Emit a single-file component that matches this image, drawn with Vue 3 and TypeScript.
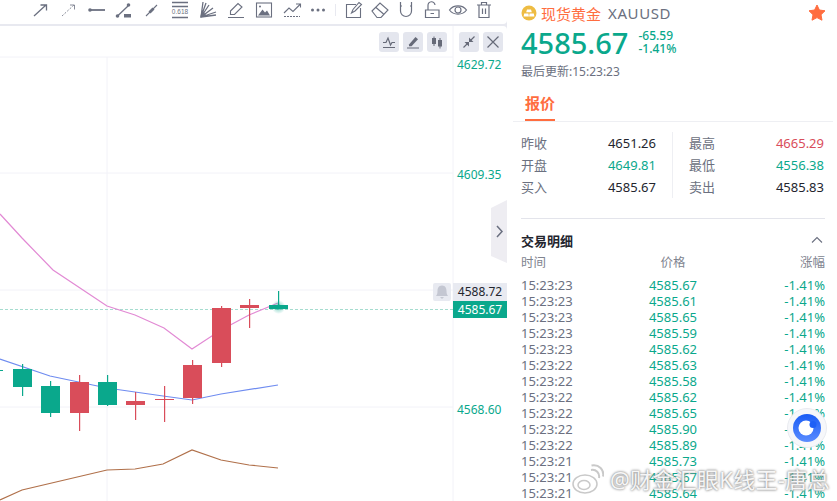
<template>
  <div class="page">
    <div class="left">
      <div class="toolbar">
        <div class="tool-group">
          <svg class="tool" viewBox="0 0 20 20"><path d="M4 16 16 5M10.500 5H16.500V10.500" /></svg>
          <svg class="tool tool--thin" viewBox="0 0 20 20"><path d="M4 16 16 5" stroke-dasharray="2 1.500" /><path d="M12 5h4.500v4.500" /></svg>
          <svg class="tool" viewBox="0 0 20 20"><path d="M3 10H19" stroke-width="1.800" /><circle class="solid" cx="4" cy="10" r="1.800" /></svg>
          <svg class="tool" viewBox="0 0 20 20"><path d="M3.500 16 14 6" stroke-width="1.300" /><circle class="solid" cx="3.500" cy="16" r="1.800" /><circle class="solid" cx="14.500" cy="5" r="1.800" /><rect class="solid" x="10" y="14" width="7" height="3.500" /></svg>
          <svg class="tool" viewBox="0 0 20 20"><path d="M4 16 15 5" stroke-width="1.100" /><path d="M7.500 12.500 11.500 8.500" stroke-width="2.800" /></svg>
          <svg class="tool" viewBox="0 0 20 20"><path d="M2 2.500H18M2 6.500H18M2 17.500H18" stroke-width="1.400" /><text class="fib" x="10" y="13.600" text-anchor="middle">0.618</text></svg>
          <svg class="tool" viewBox="0 0 20 20"><path d="M3 17 5 2M3 17 8 3M3 17 11 5M3 17 15 8M3 17 18 12M3 17 18 15" stroke-width="1.300" /><path class="solid" d="M2 18 4 10 8 15Z" /></svg>
          <svg class="tool" viewBox="0 0 20 20"><path d="M4.500 11 12 3.500l4 3.500-7.500 7.500H4.500ZM2 17.500H18" stroke-width="1.100" /></svg>
          <svg class="tool" viewBox="0 0 20 20"><rect x="2.500" y="3" width="15" height="14" stroke-width="1.100" /><path class="solid" d="M4 15.500 8.500 9.500 11 12.500 13 10.500 16 15.500Z" /><circle class="solid" cx="6" cy="6.500" r="1" /></svg>
          <svg class="tool" viewBox="0 0 20 20"><path d="M2 13 7 8l4 3.500L18 4.500M14 4h4.500v3.500" stroke-width="1.100" /><path d="M2 16.500H18" stroke-dasharray="2 1" stroke-width="1" /></svg>
          <svg class="tool tool--dots" viewBox="0 0 20 20"><circle class="solid" cx="4.500" cy="10" r="1.500" /><circle class="solid" cx="10" cy="10" r="1.500" /><circle class="solid" cx="15.500" cy="10" r="1.500" /></svg>
        </div>
        <span class="tool-sep"></span>
        <div class="tool-group tool-group--tight">
          <svg class="tool" viewBox="0 0 20 20"><path d="M16.500 8V17.500H2.500V4.500H12" stroke-width="1.100" /><path d="M7.500 13 9 9.500 15 2.500l2.500 2L11 11Z" stroke-width="1.100" /></svg>
          <svg class="tool" viewBox="0 0 20 20"><path d="M2 11 10 3l8 7-7 7.500H7ZM6 7.500l7.500 6.500" stroke-width="1.100" /></svg>
          <svg class="tool" viewBox="0 0 20 20"><path d="M4.500 2V11a5.500 5.500 0 0 0 11 0V2M4.500 6H6M14 6H15.500" stroke-width="1.200" /></svg>
          <svg class="tool" viewBox="0 0 20 20"><path d="M3.500 10H17V17.500H3.500ZM6 10V5.500a3.500 3.500 0 0 1 7-.5M8.500 13.500H12" stroke-width="1.200" /></svg>
          <svg class="tool" viewBox="0 0 20 20"><path d="M1.500 10C5.500 4.500 14.500 4.500 18.500 10 14.500 15.500 5.500 15.500 1.500 10Z" stroke-width="1.200" /><circle cx="10" cy="10" r="3" stroke-width="1.200" /></svg>
          <svg class="tool" viewBox="0 0 20 20"><path d="M3 5H17M5 5V17.500H15V5M7.500 5V2.500H12.500V5M8.500 8.500V14M11.500 8.500V14" stroke-width="1.200" /></svg>
        </div>
      </div>

      <div class="chart">
        <svg class="plot" viewBox="0 26 507 475">
          <!-- grid -->
          <path class="grid" d="M0 57H453M0 173H453M0 290H453M0 407H453M107 57V501M453 26V501" />
          <path class="last-line" d="M0 309.500H453" />
          <!-- averages -->
          <polyline class="ma ma--pink" points="0,214 22,238 53,270 107,306 135,315 164,328 192,349 221,330 249,315 278,303" />
          <polyline class="ma ma--blue" points="0,359 50,376 107,388 163,396 192,400 221,394 278,385" />
          <polyline class="ma ma--brown" points="0,500 22,490 107,470 135,469 163,464 192,450 221,460 249,465 278,468" />
          <!-- candles -->
          <g v-for="c in candles" :key="c.x" :class="c.up ? 'up' : 'down'">
            <rect :x="c.x + 9" :y="c.hi" width="1.200" :height="c.lo - c.hi" />
            <rect :x="c.x" :y="c.top" width="19" :height="c.bottom - c.top" />
          </g>
          <rect class="up-fill" x="0" y="370" width="3" height="1" />
          <circle cx="278.500" cy="307" r="7" fill="url(#glow)" />
          <circle class="up-fill" cx="278.500" cy="307" r="2.500" />
          <defs>
            <radialGradient id="glow">
              <stop offset="0%" stop-color="#0aa88c" stop-opacity="0.55" />
              <stop offset="100%" stop-color="#0aa88c" stop-opacity="0" />
            </radialGradient>
          </defs>
          <text class="axis" x="457" y="69">4629.72</text>
          <text class="axis" x="457" y="179">4609.35</text>
          <text class="axis" x="457" y="414">4568.60</text>
        </svg>

        <div class="chart-btns">
          <button class="cbtn"><svg viewBox="0 0 20 20"><path d="M4 10.500H7L9 6l2.500 7 1.500-2.500h3M4 15.500H16" /></svg></button>
          <button class="cbtn"><svg viewBox="0 0 20 20"><path class="solid" d="M6 12.500 12.500 5l2.500 2.300-6.500 7H6Z" /><path d="M4 16H16" /></svg></button>
          <button class="cbtn cbtn--gap"><svg viewBox="0 0 20 20"><path d="M7 4.500V14M13 6V16.500" stroke-width="1" /><rect class="solid" x="5" y="6" width="4" height="6" /><rect class="solid" x="11" y="8" width="4" height="6.500" /></svg></button>
          <button class="cbtn"><svg viewBox="0 0 20 20"><path d="M4.500 15.500 9 11M15.500 4.500 11 9" /><path class="solid" d="M5.500 10H10V14.500ZM14.500 10H10V5.500Z" /></svg></button>
          <button class="cbtn"><svg viewBox="0 0 20 20"><path d="M4.500 4.500 15.500 15.500M15.500 4.500 4.500 15.500" /></svg></button>
        </div>

        <div class="handle">
          <svg viewBox="0 0 16 64"><path d="M0 9 16 1V64L0 57Z" fill="#eeedf2" /><path d="M6 27l5 5.500-5 5.500" fill="none" stroke="#6b7080" stroke-width="1.500" /></svg>
        </div>

        <div class="price-tags">
          <div class="bell">
            <svg viewBox="0 0 18 18"><path d="M9 2.500C5.500 2.500 4.500 5.500 4.500 8c0 2.500-.5 3.500-1.500 5h12C14 11.500 13.500 10.500 13.500 8c0-2.500-1-5.500-4.500-5.500ZM7 14h4L9 16Z" fill="#c4c7d2" /></svg>
          </div>
          <div>
            <div class="tag">4588.72</div>
            <div class="tag tag--now">4585.67</div>
          </div>
        </div>
      </div>
    </div>

    <div class="panel">
      <div class="title">
        <svg class="coin" viewBox="0 0 16 16">
          <circle cx="8" cy="8" r="7.500" fill="#eebc42" />
          <path d="M6 4.500h4l.8 2.800H5.200ZM3.200 8.500h4.200l.5 3H2.600ZM8.600 8.500h4.200l.6 3H8.100Z" fill="#fff" />
        </svg>
        <span class="name">现货黄金</span>
        <span class="code">XAUUSD</span>
        <svg class="star" viewBox="0 0 18 18"><path d="M9 1l2.400 5 5.600.8-4 3.900 1 5.500-5-2.600-5 2.600 1-5.500-4-3.900 5.600-.8Z" fill="#ff6d3f" stroke="#ff6d3f" stroke-linejoin="round" /></svg>
      </div>
      <div class="quote">
        <span class="price">4585.67</span>
        <div class="change">
          <span>-65.59</span>
          <span>-1.41%</span>
        </div>
      </div>
      <div class="updated">最后更新:15:23:23</div>
      <div class="tabs"><span class="tab">报价</span></div>

      <div class="stats">
        <div class="stats-col">
          <div v-for="s in statsLeft" :key="s.label" class="stat">
            <span class="stat-label">{{ s.label }}</span>
            <span :class="s.cls">{{ s.value }}</span>
          </div>
        </div>
        <div class="stats-col">
          <div v-for="s in statsRight" :key="s.label" class="stat">
            <span class="stat-label">{{ s.label }}</span>
            <span :class="s.cls">{{ s.value }}</span>
          </div>
        </div>
      </div>

      <div class="trades-head">
        <span>交易明细</span>
        <svg viewBox="0 0 12 8"><path d="M1 6.500 6 1.500l5 5" fill="none" stroke="#6b7080" stroke-width="1.100" /></svg>
      </div>
      <div class="row row--head">
        <span>时间</span><span>价格</span><span>涨幅</span>
      </div>
      <div v-for="(t, i) in trades" :key="i" class="row">
        <span class="t-time">{{ t[0] }}</span>
        <span class="green">{{ t[1] }}</span>
        <span class="green">-1.41%</span>
      </div>
    </div>

    <div class="float-btn">
      <svg viewBox="0 0 40 40">
        <defs>
          <linearGradient id="fb" x1="0" y1="0" x2="0" y2="1">
            <stop offset="0%" stop-color="#1a5cf5" />
            <stop offset="100%" stop-color="#5a8cff" />
          </linearGradient>
        </defs>
        <circle cx="20" cy="20" r="19.500" fill="#f6f7fa" stroke="#e9ebf0" />
        <circle cx="20" cy="20" r="14" fill="url(#fb)" />
        <circle cx="19" cy="20" r="7.500" fill="#fff" />
        <circle cx="26" cy="16.500" r="3.500" fill="#1f60f6" />
      </svg>
    </div>

    <div class="watermark">
      <svg class="weibo" viewBox="0 0 32 32">
        <ellipse cx="13" cy="21" rx="12" ry="9" fill="rgba(255,255,255,0.75)" stroke="#c9c9c9" stroke-width="1.500" />
        <ellipse cx="12" cy="22" rx="6" ry="4.500" fill="none" stroke="#c9c9c9" stroke-width="1.500" />
        <path d="M19 7c5-1 9 3 8 8M19.500 2.500c7.500-1.500 13 4.500 11.500 11" fill="none" stroke="#c9c9c9" stroke-width="2" />
      </svg>
      <span class="wm-text">@财金汇眼K线王-唐总</span>
    </div>
  </div>
</template>

<script setup lang="ts">
interface Candle { x: number; up: boolean; top: number; bottom: number; hi: number; lo: number }

const candles: Candle[] = [
  { x: 13, up: true, top: 369, bottom: 387, hi: 364, lo: 396 },
  { x: 41, up: true, top: 386, bottom: 413, hi: 381, lo: 417 },
  { x: 70, up: false, top: 382, bottom: 413, hi: 375, lo: 431 },
  { x: 98, up: true, top: 382, bottom: 405, hi: 375, lo: 406 },
  { x: 126, up: false, top: 401, bottom: 405, hi: 392, lo: 420 },
  { x: 155, up: false, top: 399, bottom: 400, hi: 386, lo: 422 },
  { x: 183, up: false, top: 365, bottom: 398, hi: 360, lo: 404 },
  { x: 212, up: false, top: 308, bottom: 363, hi: 306, lo: 367 },
  { x: 240, up: false, top: 305, bottom: 308, hi: 299, lo: 328 },
  { x: 269, up: true, top: 305, bottom: 309, hi: 291, lo: 309 },
];

const statsLeft = [
  { label: '昨收', value: '4651.26', cls: 'dark' },
  { label: '开盘', value: '4649.81', cls: 'green' },
  { label: '买入', value: '4585.67', cls: 'dark' },
];
const statsRight = [
  { label: '最高', value: '4665.29', cls: 'red' },
  { label: '最低', value: '4556.38', cls: 'green' },
  { label: '卖出', value: '4585.83', cls: 'dark' },
];

const trades: [string, string][] = [
  ['15:23:23', '4585.67'],
  ['15:23:23', '4585.61'],
  ['15:23:23', '4585.65'],
  ['15:23:23', '4585.59'],
  ['15:23:23', '4585.62'],
  ['15:23:22', '4585.63'],
  ['15:23:22', '4585.58'],
  ['15:23:22', '4585.62'],
  ['15:23:22', '4585.65'],
  ['15:23:22', '4585.90'],
  ['15:23:22', '4585.89'],
  ['15:23:21', '4585.73'],
  ['15:23:21', '4585.67'],
  ['15:23:21', '4585.64'],
];
</script>

<style>
html, body { margin: 0; background: #fff; }
</style>

<style scoped>
.page {
  position: relative; display: flex; width: 837px; height: 501px; overflow: hidden;
  background: #fff; color: #23252e;
  font-family: "Noto Sans", "Noto Sans CJK SC", sans-serif;
}

.left { display: flex; flex-direction: column; width: 507px; flex-shrink: 0; background: #e8e9f0; }

.toolbar {
  display: flex; align-items: flex-start; justify-content: flex-end;
  height: 24px; padding-right: 13px; box-sizing: border-box;
  background: #fff; border-radius: 0 0 4px 0;
}
.tool-group { display: flex; gap: 8px; }
.tool-group--tight { gap: 6px; }
.tool { width: 20px; height: 20px; flex-shrink: 0; fill: none; stroke: #6b7080; stroke-width: 1.300; }
.tool--thin { stroke-width: 0.800; }
.tool--dots { margin-left: -2px; }
.tool .solid { fill: #6b7080; stroke: none; }
.fib { font-size: 6.500px; fill: #6b7080; stroke: none; font-family: "Liberation Sans", sans-serif; }
.tool-sep { width: 1px; height: 12px; margin: 4px 8px 0 7px; background: #e8e9f0; flex-shrink: 0; }

.chart {
  position: relative; flex: 1; margin-top: 2px; background: #fff;
  border-radius: 0 4px 0 0; overflow: hidden;
}
.plot { display: block; width: 507px; height: 475px; }
.grid { fill: none; stroke: #f2f2f8; stroke-width: 1; }
.last-line { fill: none; stroke: #a5dccf; stroke-width: 1; stroke-dasharray: 3 2; }
.ma { fill: none; stroke-width: 1.200; }
.ma--pink { stroke: #e28ad4; }
.ma--blue { stroke: #6f8cf0; }
.ma--brown { stroke: #b0704a; }
.up rect, .up-fill { fill: #0aa88c; }
.down rect { fill: #d94d5a; }
.axis { font-size: 12px; fill: #0aa88c; }

.chart-btns { position: absolute; top: 6px; left: 379px; display: flex; gap: 4px; }
.cbtn {
  display: block; width: 20px; height: 20px; padding: 0; border: 0;
  border-radius: 3px; background: #e4e6ee;
}
.cbtn--gap { margin-right: 8px; }
.cbtn svg { display: block; width: 20px; height: 20px; fill: none; stroke: #666a78; stroke-width: 1.200; }
.cbtn .solid { fill: #666a78; stroke: none; }

.handle { position: absolute; top: 173px; left: 491px; width: 16px; height: 64px; }
.handle svg { display: block; width: 16px; height: 64px; }

.price-tags { position: absolute; top: 257px; left: 433px; display: flex; align-items: flex-start; gap: 2px; }
.bell { width: 18px; height: 18px; border-radius: 2px; background: #e8eaf1; }
.bell svg { display: block; width: 18px; height: 18px; }
.tag {
  width: 54px; height: 18px; line-height: 18px; text-align: center;
  font-size: 12px; background: #e8eaf1; color: #23252e;
}
.tag--now { height: 17px; line-height: 17px; background: #0aa88c; color: #fff; }

.panel { width: 327px; margin-left: 3px; padding: 0 12px 0 11px; box-sizing: border-box; flex-shrink: 0; }

.title { display: flex; align-items: center; height: 24px; padding-top: 1px; }
.coin { width: 16px; height: 16px; margin-right: 4px; }
.name { font-size: 15px; color: #ff6d3f; }
.code { margin-left: 7px; font-size: 15px; color: #6b7080; letter-spacing: 0.600px; }
.star { width: 18px; height: 18px; margin-left: auto; margin-right: -1px; }

.quote { display: flex; align-items: center; height: 40px; margin-top: -2px; }
.price { font-size: 29px; font-weight: 500; color: #0aa88c; line-height: 40px; }
.change { display: flex; flex-direction: column; margin: 0 0 2px 10px; font-size: 12px; line-height: 13px; color: #0aa88c; font-weight: 500; }

.updated { margin-top: 1px; font-size: 12px; line-height: 16px; color: #6b7080; }

.tabs { height: 49px; margin: -7px -8px 0; padding-left: 12px; box-sizing: border-box; border-bottom: 1px solid #eeeff3; display: flex; align-items: flex-end; }
.tab {
  font-size: 15px; font-weight: 700; color: #ff6d3f; line-height: 22px;
  width: 30px; padding-bottom: 5px; border-bottom: 2px solid #ff6d3f;
}

.stats { display: flex; gap: 33px; padding-top: 10px; height: 97px; box-sizing: border-box; border-bottom: 1px solid #e3e4eb; font-size: 13px; }
.stats-col { width: 135px; height: 66px; }
.stats-col:first-child { position: relative; }
.stats-col:first-child::after {
  content: ""; position: absolute; top: 0; bottom: 0; right: -17px; width: 1px; background: #eeeff3;
}
.stat { display: flex; justify-content: space-between; height: 22px; line-height: 22px; }
.stat-label { color: #6b7080; }
.dark { color: #23252e; }
.green { color: #0aa88c; }
.red { color: #d94d5a; }

.trades-head {
  display: flex; align-items: center; justify-content: space-between;
  height: 24px; margin-top: 9px; font-size: 13px; font-weight: 700; color: #23252e;
}
.trades-head svg { width: 12px; height: 8px; margin-right: 2px; }

.row {
  display: grid; grid-template-columns: 1fr 1fr 1fr; width: 304px;
  height: 16px; line-height: 16px; font-size: 13px;
}
.row span:nth-child(2) { text-align: center; }
.row span:nth-child(3) { text-align: right; }
.row--head { height: 20px; line-height: 18px; margin: 2px 0 3px; color: #80848f; font-size: 12.500px; }
.t-time { color: #6b7080; }

.float-btn { position: absolute; left: 787px; top: 408px; width: 40px; height: 40px; }
.float-btn svg { display: block; width: 40px; height: 40px; }

.watermark { position: absolute; left: 572px; top: 463px; display: flex; align-items: center; gap: 6px; pointer-events: none; }
.weibo { width: 32px; height: 32px; }
.wm-text {
  font-size: 22px; line-height: 26px; letter-spacing: 0.300px; color: rgba(255, 255, 255, 0.92); white-space: nowrap;
  text-shadow: 0 0 3px #8f8f8f, 0 0 2px #8f8f8f;
}
</style>
